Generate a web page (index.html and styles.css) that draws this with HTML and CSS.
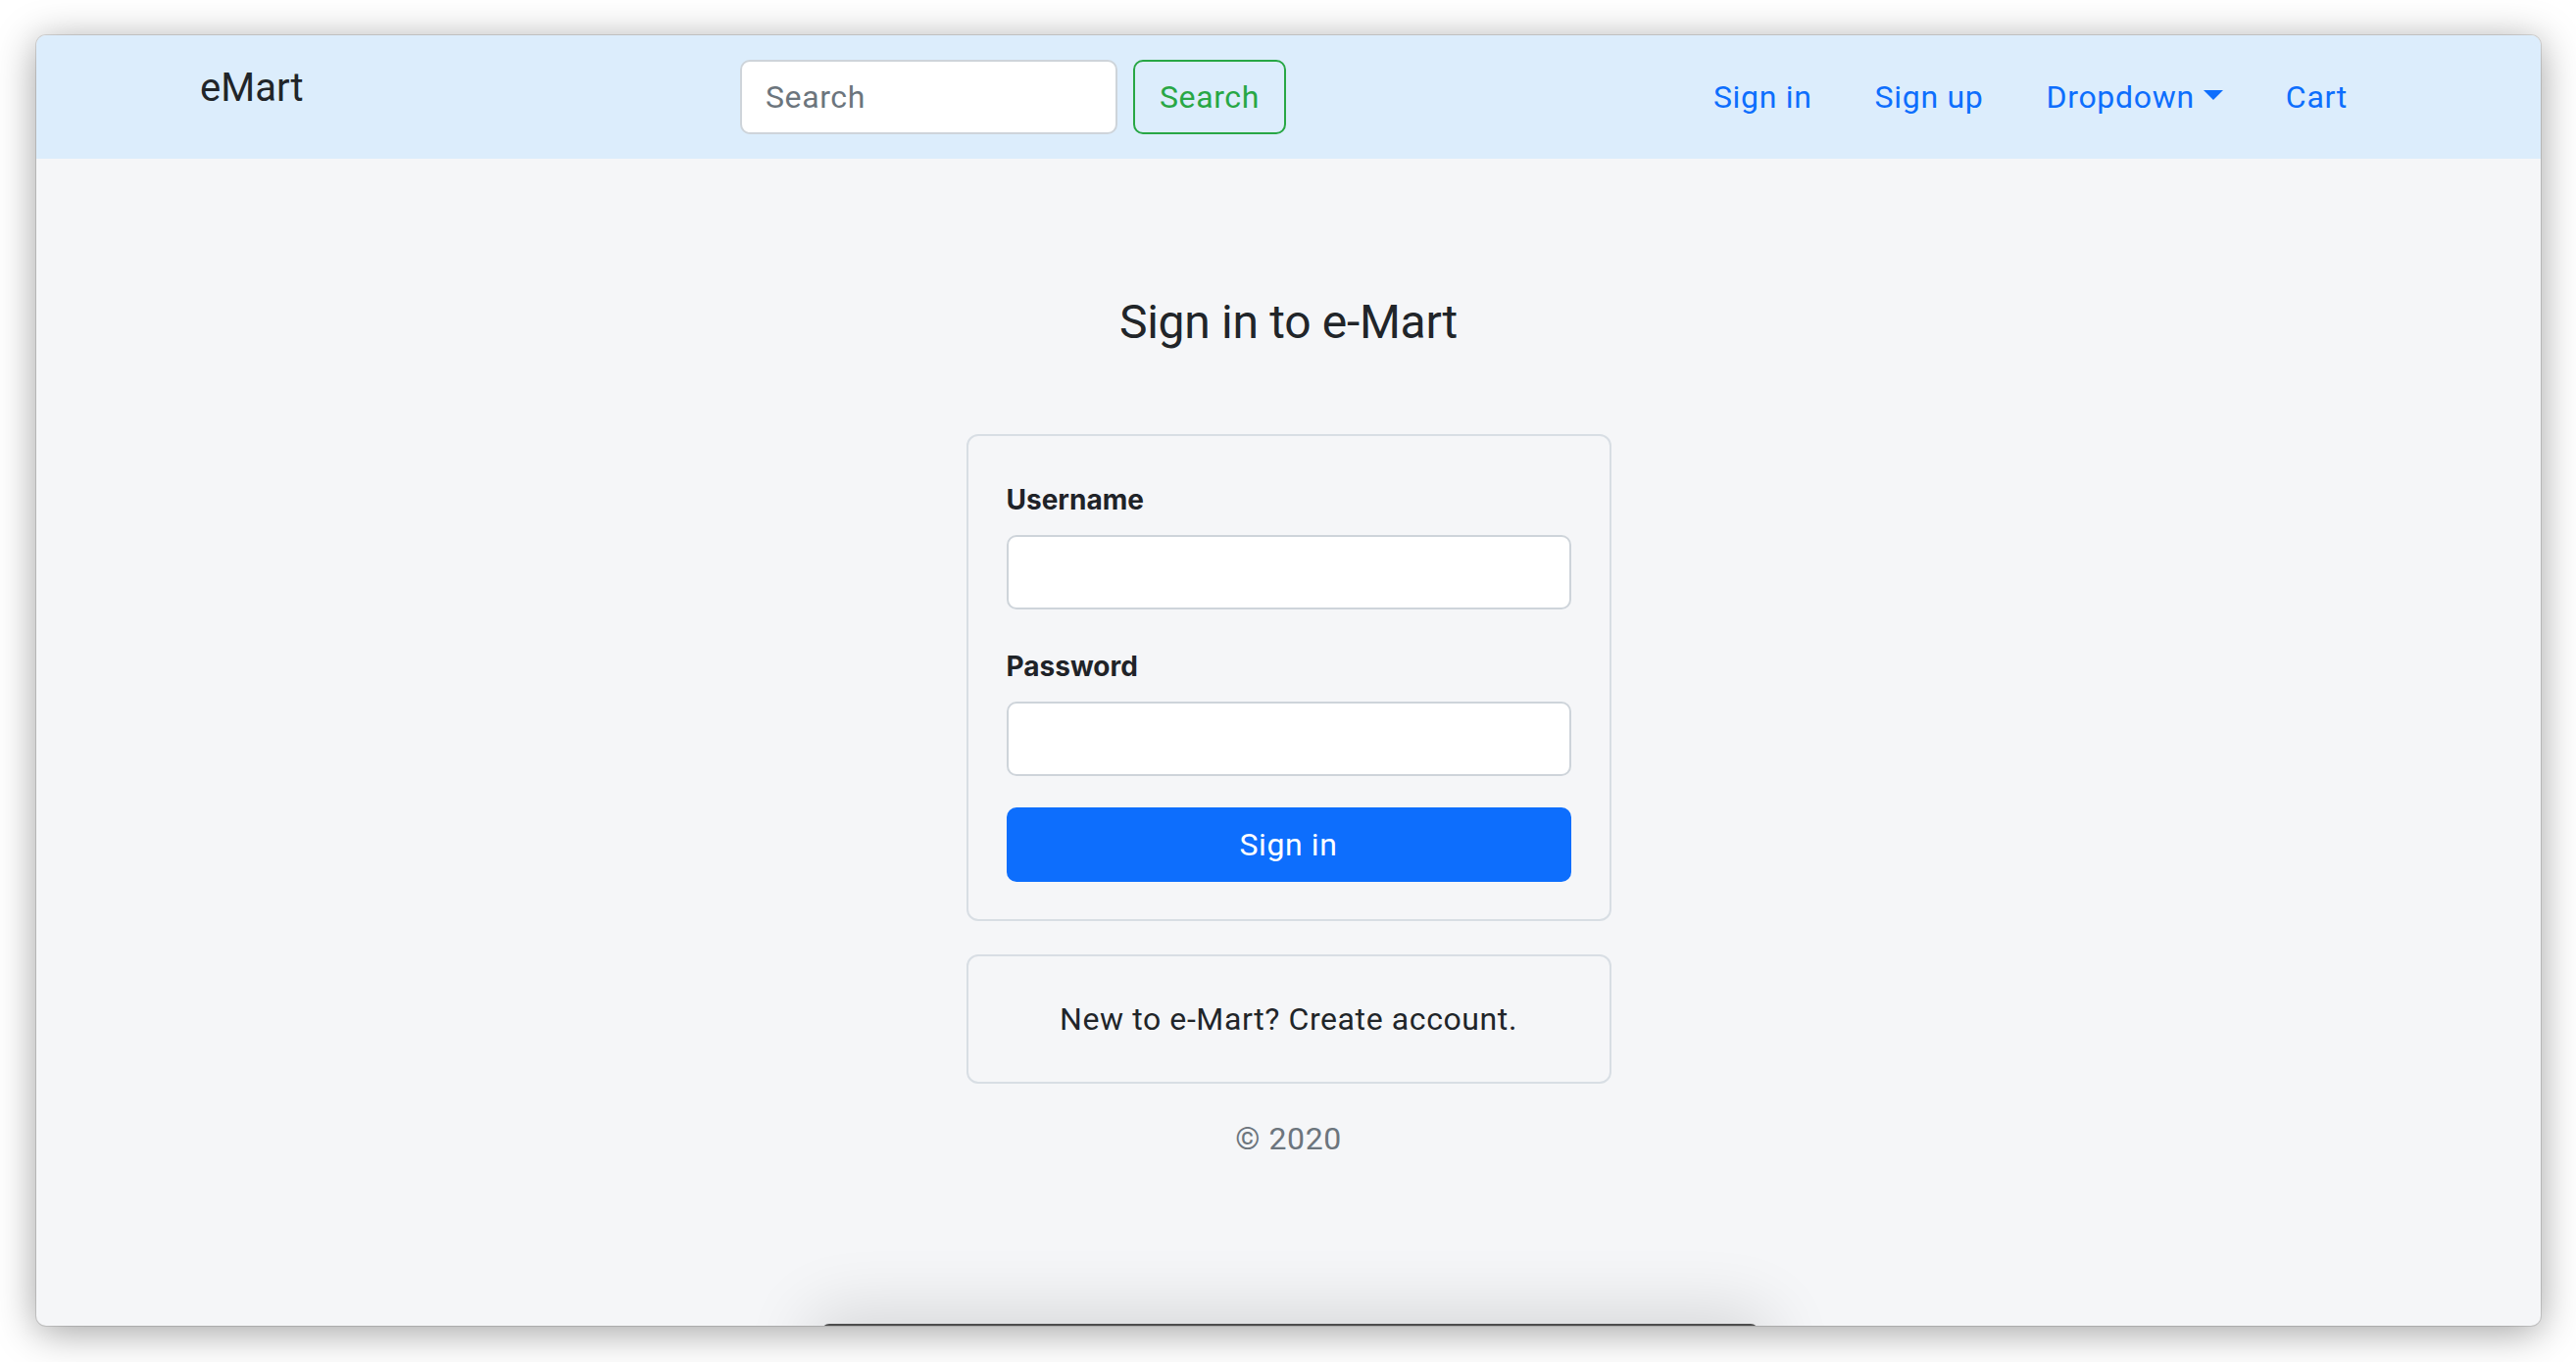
FILE: index.html
```html
<!DOCTYPE html>
<html lang="en">
<head>
<meta charset="utf-8">
<title>eMart - Sign in</title>
<link rel="stylesheet" href="styles.css">
</head>
<body>
<div class="stage">
  <div class="window">
    <nav class="navbar">
      <a class="brand" href="#">eMart</a>
      <form class="search">
        <input class="search-input" type="search" placeholder="Search">
        <button class="btn-outline-success" type="button">Search</button>
      </form>
      <ul class="nav-links">
        <li><a class="nav-link" href="#">Sign in</a></li>
        <li><a class="nav-link" href="#">Sign up</a></li>
        <li><a class="nav-link dropdown-toggle" href="#">Dropdown</a></li>
        <li><a class="nav-link" href="#">Cart</a></li>
      </ul>
    </nav>
    <main class="main">
      <h1 class="title">Sign in to e-Mart</h1>
      <form class="card login">
        <label class="label" for="username">Username</label>
        <input class="field" id="username" type="text">
        <label class="label label-pw" for="password">Password</label>
        <input class="field" id="password" type="password">
        <button class="btn-primary" type="button">Sign in</button>
      </form>
      <div class="card signup">New to e-Mart? Create account.</div>
      <footer class="copy">© 2020</footer>
    </main>
    <div class="dock-shadow"></div>
  </div>
</div>
</body>
</html>
```

FILE: styles.css
```css
* { box-sizing: border-box; }
html, body { margin: 0; padding: 0; background: #ffffff; }
body {
  font-family: Roboto, "Liberation Sans", sans-serif;
  color: #212529;
}
.stage {
  width: 2628px;
  height: 1390px;
  padding: 36px 36px 0 37px;
  overflow: hidden;
}
.window {
  position: relative;
  width: 2555px;
  height: 1317px;
  border-radius: 10px;
  overflow: hidden;
  background: #f5f6f8;
  box-shadow: 0 0 0 1px rgba(0, 0, 0, 0.12), 0 6px 40px rgba(0, 0, 0, 0.38);
}

/* navbar */
.navbar {
  display: flex;
  align-items: center;
  height: 126px;
  padding: 0 165px 0 167px;
  background: #dcedfc;
}
.brand {
  flex: 0 0 551px;
  font-size: 40px;
  line-height: 60px;
  color: #212529;
  text-decoration: none;
  margin-bottom: 18px;
}
.search {
  display: flex;
  gap: 16px;
  margin: 0;
}
.search-input {
  width: 385px;
  height: 76px;
  padding: 0 24px;
  border: 2px solid #ced4da;
  border-radius: 10px;
  background: #ffffff;
  font-family: inherit;
  font-size: 32px;
  letter-spacing: 0.6px;
  color: #212529;
  outline: none;
}
.search-input::placeholder { color: #6c757d; }
.btn-outline-success {
  height: 76px;
  padding: 0 25px;
  border: 2px solid #28a745;
  border-radius: 10px;
  background: transparent;
  color: #28a745;
  font-family: inherit;
  font-size: 32px;
  letter-spacing: 0.6px;
}
.nav-links {
  display: flex;
  list-style: none;
  margin: 0 0 0 auto;
  padding: 0;
}
.nav-link {
  display: block;
  padding: 0 32px;
  font-size: 32px;
  line-height: 48px;
  letter-spacing: 0.7px;
  color: #0d6efd;
  text-decoration: none;
}
.dropdown-toggle::after {
  content: "";
  display: inline-block;
  margin-left: 9px;
  vertical-align: 8px;
  border-top: 10px solid #0d6efd;
  border-left: 10px solid transparent;
  border-right: 10px solid transparent;
}

/* main */
.main {
  display: flex;
  flex-direction: column;
  align-items: center;
  padding-top: 138px;
}
.title {
  margin: 0;
  font-size: 48px;
  font-weight: 400;
  line-height: 57.6px;
  letter-spacing: -0.3px;
  color: #212529;
}
.card {
  width: 658px;
  border: 2px solid #d8dee4;
  border-radius: 12px;
}
.login {
  display: flex;
  flex-direction: column;
  margin: 85px 0 0;
  padding: 44px 39px 38px;
}
.label {
  font-family: Inter, Roboto, sans-serif;
  font-size: 28px;
  font-weight: 700;
  line-height: 42px;
  margin-bottom: 15px;
  color: #1f2328;
}
.label-pw { margin-top: 37px; }
.field {
  width: 100%;
  height: 76px;
  padding: 0 24px;
  border: 2px solid #ced4da;
  border-radius: 10px;
  background: #ffffff;
  font-family: inherit;
  font-size: 32px;
  outline: none;
}
.btn-primary {
  margin-top: 32px;
  height: 76px;
  border: 0;
  border-radius: 10px;
  background: #0d6efd;
  color: #ffffff;
  font-family: inherit;
  font-size: 32px;
  letter-spacing: 0.6px;
}
.signup {
  margin-top: 34px;
  padding: 40px;
  text-align: center;
  font-size: 32px;
  line-height: 48px;
  letter-spacing: 0.6px;
}
.copy {
  margin-top: 32px;
  font-size: 32px;
  line-height: 48px;
  letter-spacing: 0.6px;
  color: #6c757d;
}

/* shadow of the element sitting just below the window edge */
.dock-shadow {
  position: absolute;
  left: 801px;
  bottom: -60px;
  width: 956px;
  height: 62px;
  background: #4d4d4d;
  border-radius: 8px;
  box-shadow: 0 0 70px 10px rgba(0, 0, 0, 0.14);
}
```
